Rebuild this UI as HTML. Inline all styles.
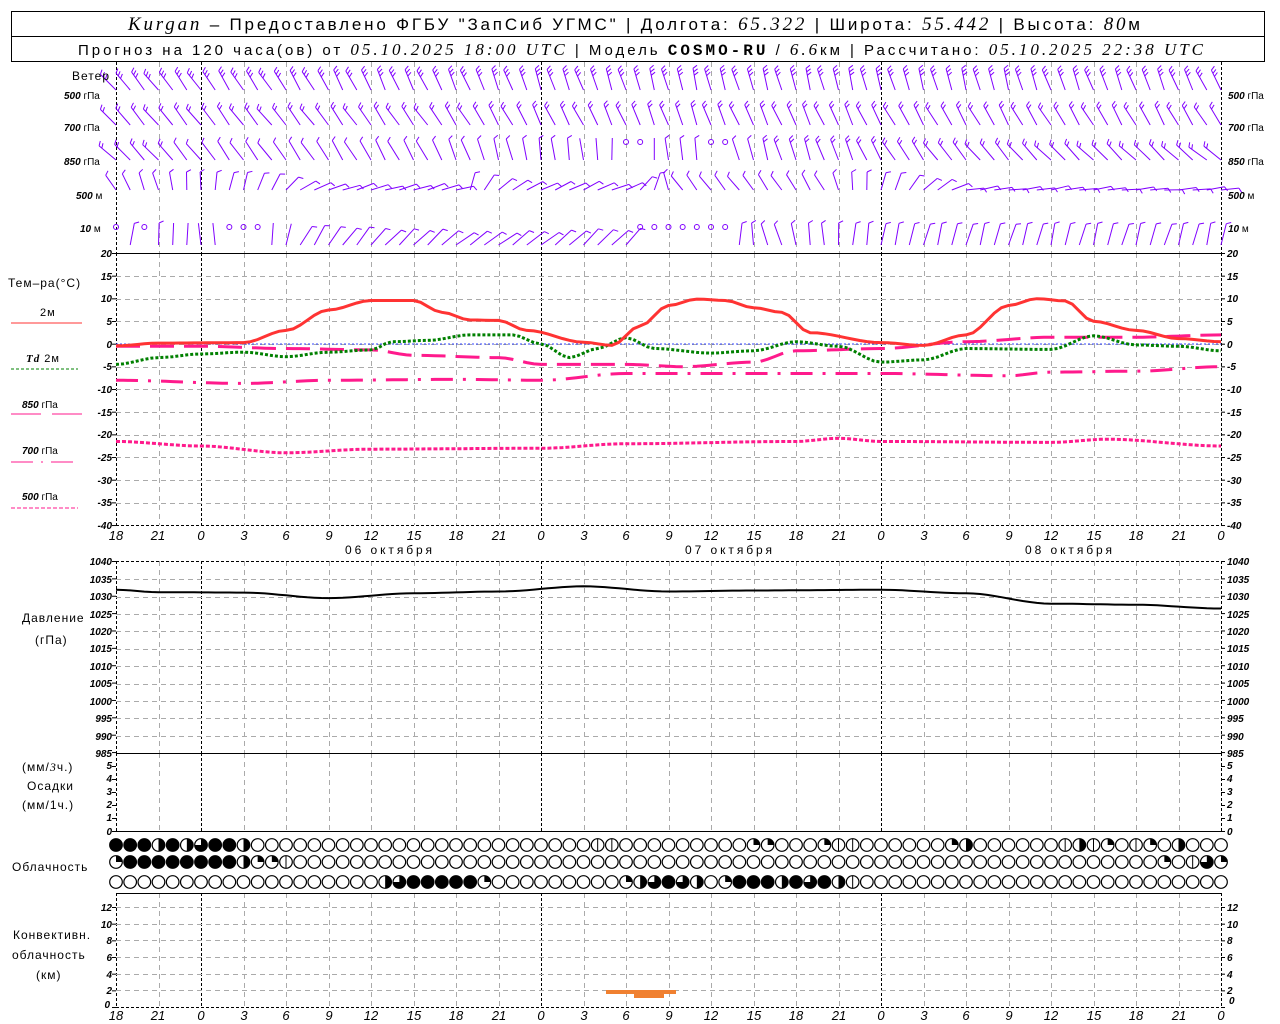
<!DOCTYPE html>
<html><head><meta charset="utf-8"><style>
html,body{margin:0;padding:0;background:#fff;width:1280px;height:1024px;overflow:hidden}
svg{display:block}
text{font-family:"Liberation Sans","DejaVu Sans",sans-serif;fill:#000}
.t{font-size:10px;font-style:italic;font-weight:bold}
.l{font-size:12px;letter-spacing:1px}
.i{font-style:italic;font-family:"Liberation Serif",serif}
</style></head><body>
<svg id="s" width="1280" height="1024" viewBox="0 0 1280 1024" xmlns="http://www.w3.org/2000/svg">
<rect x="11.5" y="11.5" width="1253" height="50" fill="none" stroke="#000"/>
<line x1="11" y1="36.5" x2="1265" y2="36.5" stroke="#000"/>
<text x="128" y="30" textLength="1012" lengthAdjust="spacing" style="font-size:17px"><tspan class="i" style="font-size:19px">Kurgan</tspan> – Предоставлено ФГБУ "ЗапСиб УГМС" | Долгота: <tspan class="i" style="font-size:19px">65.322</tspan> | Широта: <tspan class="i" style="font-size:19px">55.442</tspan> | Высота: <tspan class="i" style="font-size:19px">80</tspan>м</text>
<text x="78" y="55" textLength="1125" lengthAdjust="spacing" style="font-size:15px">Прогноз на 120 часа(ов) от <tspan class="i" style="font-size:17px">05.10.2025 18:00 UTC</tspan>  | Модель <tspan style="font-family:'Liberation Mono',monospace;font-weight:bold;font-size:16px">COSMO-RU</tspan> / <tspan class="i" style="font-size:17px">6.6</tspan>км | Рассчитано: <tspan class="i" style="font-size:17px">05.10.2025 22:38 UTC</tspan></text>
<g id="g"></g>
<text class="l" x="72" y="80">Ветер</text>
<text class="t" x="64" y="99">500 <tspan style="font-style:normal;font-weight:normal">гПа</tspan></text>
<text class="t" x="64" y="131">700 <tspan style="font-style:normal;font-weight:normal">гПа</tspan></text>
<text class="t" x="64" y="165">850 <tspan style="font-style:normal;font-weight:normal">гПа</tspan></text>
<text class="t" x="76" y="199">500 <tspan style="font-style:normal;font-weight:normal">м</tspan></text>
<text class="t" x="80" y="232">10 <tspan style="font-style:normal;font-weight:normal">  м</tspan></text>
<text class="t" x="1228" y="99">500 <tspan style="font-style:normal;font-weight:normal">гПа</tspan></text>
<text class="t" x="1228" y="131">700 <tspan style="font-style:normal;font-weight:normal">гПа</tspan></text>
<text class="t" x="1228" y="165">850 <tspan style="font-style:normal;font-weight:normal">гПа</tspan></text>
<text class="t" x="1228" y="199">500 <tspan style="font-style:normal;font-weight:normal">м</tspan></text>
<text class="t" x="1228" y="232">10 <tspan style="font-style:normal;font-weight:normal">  м</tspan></text>
<text class="l" x="8" y="287">Тем–ра(°C)</text>
<text class="l" x="40" y="316" style="font-size:11px">2м</text>
<line x1="11" y1="323" x2="82" y2="323" stroke="#ff3333"/>
<text class="l" x="26" y="362" style="font-size:11px"><tspan class="i" style="font-weight:bold">Td</tspan>  2м</text>
<line x1="11" y1="369" x2="78" y2="369" stroke="#008000" stroke-dasharray="3,2"/>
<text class="t" x="22" y="408">850 <tspan style="font-style:normal;font-weight:normal">гПа</tspan></text>
<line x1="11" y1="414" x2="41" y2="414" stroke="#ff1a8c"/><line x1="52" y1="414" x2="82" y2="414" stroke="#ff1a8c"/>
<text class="t" x="22" y="454">700 <tspan style="font-style:normal;font-weight:normal">гПа</tspan></text>
<line x1="11" y1="462" x2="78" y2="462" stroke="#ff1a8c" stroke-dasharray="22,8,2,8"/>
<text class="t" x="22" y="500">500 <tspan style="font-style:normal;font-weight:normal">гПа</tspan></text>
<line x1="11" y1="508" x2="78" y2="508" stroke="#ff1a8c" stroke-dasharray="4,2"/>
<text class="l" x="22" y="622">Давление</text>
<text class="l" x="35" y="644">(гПа)</text>
<text class="l" x="22" y="771">(мм/<tspan class="i">3</tspan>ч.)</text>
<text class="l" x="27" y="790">Осадки</text>
<text class="l" x="22" y="809">(мм/1ч.)</text>
<text class="l" x="12" y="871">Облачность</text>
<text class="l" x="13" y="939">Конвективн.</text>
<text class="l" x="12" y="959">облачность</text>
<text class="l" x="36" y="979">(км)</text>
<g class="t" text-anchor="end">
<text x="112" y="257">20</text><text x="112" y="280">15</text><text x="112" y="302">10</text><text x="112" y="325">5</text><text x="112" y="348">0</text><text x="112" y="370">-5</text><text x="112" y="393">-10</text><text x="112" y="416">-15</text><text x="112" y="438">-20</text><text x="112" y="461">-25</text><text x="112" y="484">-30</text><text x="112" y="506">-35</text><text x="112" y="529">-40</text>
<text x="112" y="565">1040</text><text x="112" y="583">1035</text><text x="112" y="600">1030</text><text x="112" y="618">1025</text><text x="112" y="635">1020</text><text x="112" y="652">1015</text><text x="112" y="670">1010</text><text x="112" y="687">1005</text><text x="112" y="705">1000</text><text x="112" y="722">995</text><text x="112" y="740">990</text><text x="112" y="757">985</text>
<text x="112" y="769">5</text><text x="112" y="782">4</text><text x="112" y="795">3</text><text x="112" y="808">2</text><text x="112" y="821">1</text><text x="112" y="835">0</text>
<text x="112" y="911">12</text><text x="112" y="928">10</text><text x="112" y="944">8</text><text x="112" y="961">6</text><text x="112" y="978">4</text><text x="112" y="994">2</text><text x="110" y="1008">0</text>
</g>
<g class="t">
<text x="1227" y="257">20</text><text x="1227" y="280">15</text><text x="1227" y="302">10</text><text x="1227" y="325">5</text><text x="1227" y="348">0</text><text x="1227" y="370">-5</text><text x="1227" y="393">-10</text><text x="1227" y="416">-15</text><text x="1227" y="438">-20</text><text x="1227" y="461">-25</text><text x="1227" y="484">-30</text><text x="1227" y="506">-35</text><text x="1227" y="529">-40</text>
<text x="1227" y="565">1040</text><text x="1227" y="583">1035</text><text x="1227" y="600">1030</text><text x="1227" y="618">1025</text><text x="1227" y="635">1020</text><text x="1227" y="652">1015</text><text x="1227" y="670">1010</text><text x="1227" y="687">1005</text><text x="1227" y="705">1000</text><text x="1227" y="722">995</text><text x="1227" y="740">990</text><text x="1227" y="757">985</text>
<text x="1227" y="769">5</text><text x="1227" y="782">4</text><text x="1227" y="795">3</text><text x="1227" y="808">2</text><text x="1227" y="821">1</text><text x="1227" y="835">0</text>
<text x="1227" y="911">12</text><text x="1227" y="928">10</text><text x="1227" y="944">8</text><text x="1227" y="961">6</text><text x="1227" y="978">4</text><text x="1227" y="994">2</text><text x="1229" y="1004">0</text>
</g>
<g class="t" text-anchor="middle" style="font-size:13px;font-weight:normal">
<text x="116" y="540">18</text><text x="158" y="540">21</text><text x="201" y="540">0</text><text x="244" y="540">3</text><text x="286" y="540">6</text><text x="329" y="540">9</text><text x="371" y="540">12</text><text x="414" y="540">15</text><text x="456" y="540">18</text><text x="499" y="540">21</text><text x="541" y="540">0</text><text x="584" y="540">3</text><text x="626" y="540">6</text><text x="669" y="540">9</text><text x="711" y="540">12</text><text x="754" y="540">15</text><text x="796" y="540">18</text><text x="839" y="540">21</text><text x="881" y="540">0</text><text x="924" y="540">3</text><text x="966" y="540">6</text><text x="1009" y="540">9</text><text x="1051" y="540">12</text><text x="1094" y="540">15</text><text x="1136" y="540">18</text><text x="1179" y="540">21</text><text x="1221" y="540">0</text>
<text x="116" y="1020">18</text><text x="158" y="1020">21</text><text x="201" y="1020">0</text><text x="244" y="1020">3</text><text x="286" y="1020">6</text><text x="329" y="1020">9</text><text x="371" y="1020">12</text><text x="414" y="1020">15</text><text x="456" y="1020">18</text><text x="499" y="1020">21</text><text x="541" y="1020">0</text><text x="584" y="1020">3</text><text x="626" y="1020">6</text><text x="669" y="1020">9</text><text x="711" y="1020">12</text><text x="754" y="1020">15</text><text x="796" y="1020">18</text><text x="839" y="1020">21</text><text x="881" y="1020">0</text><text x="924" y="1020">3</text><text x="966" y="1020">6</text><text x="1009" y="1020">9</text><text x="1051" y="1020">12</text><text x="1094" y="1020">15</text><text x="1136" y="1020">18</text><text x="1179" y="1020">21</text><text x="1221" y="1020">0</text>
</g>
<g class="l" style="font-size:12px">
<text x="345" y="554" textLength="88" lengthAdjust="spacing">06 октября</text><text x="685" y="554" textLength="88" lengthAdjust="spacing">07 октября</text><text x="1025" y="554" textLength="88" lengthAdjust="spacing">08 октября</text>
</g>
</svg>
<script>
(function(){
var g=document.getElementById('g'),h='';
function X(t){return 116+t*14.1667;}
function L(x1,y1,x2,y2,st){h+='<line x1="'+x1+'" y1="'+y1+'" x2="'+x2+'" y2="'+y2+'" '+st+'/>';}
var gray='stroke="#aaa" stroke-dasharray="5,4"',blk='stroke="#000" stroke-dasharray="3,2"';
for(var i=0;i<=26;i++){var x=Math.round(X(i*3))+0.5;var day=(i%8==2)||i==0||i==26;
 var st=day?blk:gray;
 L(x,62,x,253,st);L(x,253,x,525,st);L(x,561,x,753,st);L(x,753,x,831,st);L(x,893,x,1007,st);}
function H(y,st){L(116,y,1221,y,st);}
for(var v=15;v>-40;v-=5){H(Math.round(344-v*4.533)+0.5,gray);}
H(253.5,'stroke="#000"');H(525.5,blk);
for(var p=1035;p>985;p-=5)H(Math.round(562+(1040-p)*3.473)+0.5,gray);
H(561.5,blk);H(753.5,'stroke="#000"');
H(831.5,'stroke="#000"');H(893.5,'stroke="#000"');
for(var c=2;c<=12;c+=2)H(Math.round(1007-c*8.33)+0.5,gray);H(1007.5,blk);
function ticks(a,b,step){for(var y=a;y<=b+0.1;y+=step){L(112,y,116,y,'stroke="#000"');L(1221,y,1225,y,'stroke="#000"');}}
ticks(253.5,525.5,22.67);ticks(561.5,753.5,17.37);ticks(766.5,831.5,13);ticks(907.5,1007.5,16.67);
function curve(pts,fy,st){var d='';var n=pts.length;
 for(var t=0;t<=78;t+=0.5){var k=0;while(k<n-2&&pts[k+1][0]<t)k++;var a=pts[k],b=pts[k+1];
  var f=(t-a[0])/(b[0]-a[0]);f=Math.max(0,Math.min(1,f));f=f*f*(3-2*f);var v=a[1]+(b[1]-a[1])*f;
  d+=(d?'L':'M')+X(t).toFixed(1)+','+fy(v).toFixed(1);}
 h+='<path d="'+d+'" fill="none" '+st+'/>';}
var ty=function(v){return 344-v*4.533;};
L(116,344,1221,344,'stroke="#3344ff" stroke-dasharray="2,2"');
curve([[0,-8],[9,-8.7],[15,-8],[24,-7.8],[30,-8],[36,-6.5],[54,-6.5],[63,-7],[66,-6.2],[72,-6],[78,-5]],ty,'stroke="#ff1a8c" stroke-width="3" stroke-dasharray="22,10,3,10"');
curve([[0,-21.5],[6,-22.5],[12,-24],[18,-23.2],[30,-23],[36,-22],[48,-21.5],[51,-20.8],[54,-21.5],[66,-21.7],[70,-21],[78,-22.5]],ty,'stroke="#ff1a8c" stroke-width="3" stroke-dasharray="4,2"');
curve([[0,-0.5],[6,-0.5],[12,-1],[18,-1.3],[21,-2.5],[27,-3],[30,-4.5],[36,-4.5],[40,-5],[45,-4],[48,-1.5],[54,-1],[60,0.5],[66,1.5],[72,1.5],[78,2]],ty,'stroke="#ff1a8c" stroke-width="3" stroke-dasharray="24,10"');
curve([[0,-4.5],[3,-3],[6,-2.2],[9,-1.8],[12,-2.8],[15,-1.8],[18,-1.3],[19.5,0.5],[22,0.8],[25,2],[28,2],[30,0],[32,-3],[34,-1],[36,1.4],[38,-1],[42,-2],[45,-1.5],[48,0.5],[51,-0.5],[54,-4],[57,-3.5],[60,-1],[66,-1.2],[69,1.8],[72,-0.2],[75,-0.5],[78,-1.5]],ty,'stroke="#008000" stroke-width="3" stroke-dasharray="3,2"');
curve([[0,-0.4],[3,0.2],[9,0.3],[12,3],[15,7.5],[18,9.6],[21,9.6],[23,7],[25,5.3],[27,5.2],[29,3],[33,0.4],[35,-0.3],[37,4],[39,8.5],[41,9.9],[43,9.6],[45,8],[47,7],[49,2.5],[54,0.3],[57,-0.3],[60,2],[63,8.5],[65,10],[67,9.5],[69,5],[72,3],[75,1.2],[78,0.5]],ty,'stroke="#ff3333" stroke-width="3"');
var py=function(v){return 562+(1040-v)*3.473;};
curve([[0,1032],[3,1031.3],[9,1031.2],[15,1029.6],[21,1031],[27,1031.5],[33,1033],[39,1031.5],[45,1031.8],[54,1032],[60,1031],[66,1028],[72,1027.7],[78,1026.6]],py,'stroke="#000" stroke-width="2"');
h+='<rect x="606" y="990" width="70" height="4" fill="#f08030"/><rect x="634" y="993" width="30" height="5" fill="#f08030"/>';
var fill3={19:'h',20:'t',21:'f',22:'f',23:'f',24:'f',25:'f',26:'q',36:'q',37:'h',38:'t',39:'f',40:'t',41:'h',43:'q',44:'f',45:'f',46:'f',47:'h',48:'f',49:'t',50:'f',51:'h',52:'v'};
var fill1={0:'f',1:'f',2:'f',3:'h',4:'f',5:'h',6:'t',7:'f',8:'f',9:'h',34:'v',35:'v',45:'q',46:'q',50:'q',51:'v',52:'v',59:'q',60:'h',67:'v',68:'h',69:'v',70:'q',72:'v',73:'q',75:'h'};
var fill2={0:'q',1:'f',2:'f',3:'f',4:'f',5:'f',6:'f',7:'f',8:'f',9:'h',10:'q',11:'q',12:'v',74:'q',76:'v',77:'t',78:'q'};
[[845,fill1],[862,fill2],[882,fill3]].forEach(function(r){var y=r[0];
 for(var i=0;i<=78;i++){var x=X(i),k=r[1][i]||'',R=6.3;
  h+='<circle cx="'+x+'" cy="'+y+'" r="'+R+'" fill="'+(k=='f'?'#000':'#fff')+'" stroke="#000" stroke-width="1.2"/>';
  if(k=='h')h+='<path d="M'+x+','+(y-R)+'A'+R+','+R+' 0 0 1 '+x+','+(y+R)+'Z"/>';
  if(k=='t')h+='<path d="M'+x+','+y+'L'+x+','+(y-R)+'A'+R+','+R+' 0 1 1 '+(x-R)+','+y+'Z"/>';
  if(k=='q')h+='<path d="M'+x+','+y+'L'+x+','+(y-R)+'A'+R+','+R+' 0 0 1 '+(x+R)+','+y+'Z"/>';
  if(k=='v')h+='<line x1="'+x+'" y1="'+(y-R)+'" x2="'+x+'" y2="'+(y+R)+'" stroke="#000"/>';
 }});
var rowsW=[[90,[[0,-40,3],[20,-25,3],[40,-15,3],[60,-15,3],[78,-25,3]]],
 [125,[[0,-40,2],[20,-35,2],[40,-20,2],[60,-30,2],[78,-30,2]]],
 [160,[[0,-45,2],[10,-35,1],[20,-30,1],[30,-10,1],[36,0,0],[41,-10,1],[50,-20,2],[60,-40,2],[78,-50,2]]],
 [190,[[0,-30,1],[10,20,1],[14,70,1],[24,75,1],[25,20,1],[28,60,1],[36,70,1],[40,-40,1],[50,-30,1],[60,80,1],[78,85,1]]],
 [245,[[0,15,1],[8,-10,0],[12,15,0],[13,30,1],[25,55,1],[36,45,1],[41,60,0],[46,-20,1],[55,15,1],[78,15,1]]]];
rowsW.forEach(function(r,ri){var yb=r[0],k=r[1];
 for(var i=0;i<=78;i++){var x=X(i);
  if((ri==2&&[36,37,42,43].indexOf(i)>=0)||(ri==4&&[0,2,8,9,10,37,38,39,40,41,42,43].indexOf(i)>=0)){h+='<circle cx="'+x+'" cy="'+(yb-18)+'" r="2.5" fill="none" stroke="#8000ff"/>';continue;}
  var j=0;while(j<k.length-2&&k[j+1][0]<i)j++;var a=k[j],b=k[j+1];var f=Math.max(0,Math.min(1,(i-a[0])/(b[0]-a[0])));
  var ang=(a[1]+(b[1]-a[1])*f+((i*37)%11-5))*Math.PI/180,nb=f<0.5?a[2]:b[2];
  var len=ri==3?18:22,x0=x,y0=yb,x1=x0+Math.sin(ang)*len,y1=y0-Math.cos(ang)*len;
  L(x0.toFixed(1),y0,x1.toFixed(1),y1.toFixed(1),'stroke="#8000ff" stroke-width="1"');
  for(var q=0;q<nb;q++){var bx=x0+Math.sin(ang)*(len-q*3.5),by=y0-Math.cos(ang)*(len-q*3.5);
   var ba=ang+1.1;L(bx.toFixed(1),by.toFixed(1),(bx+Math.sin(ba)*5).toFixed(1),(by-Math.cos(ba)*5).toFixed(1),'stroke="#8000ff" stroke-width="1"');}
 }});
g.innerHTML=h;
})();
</script>
</body></html>
